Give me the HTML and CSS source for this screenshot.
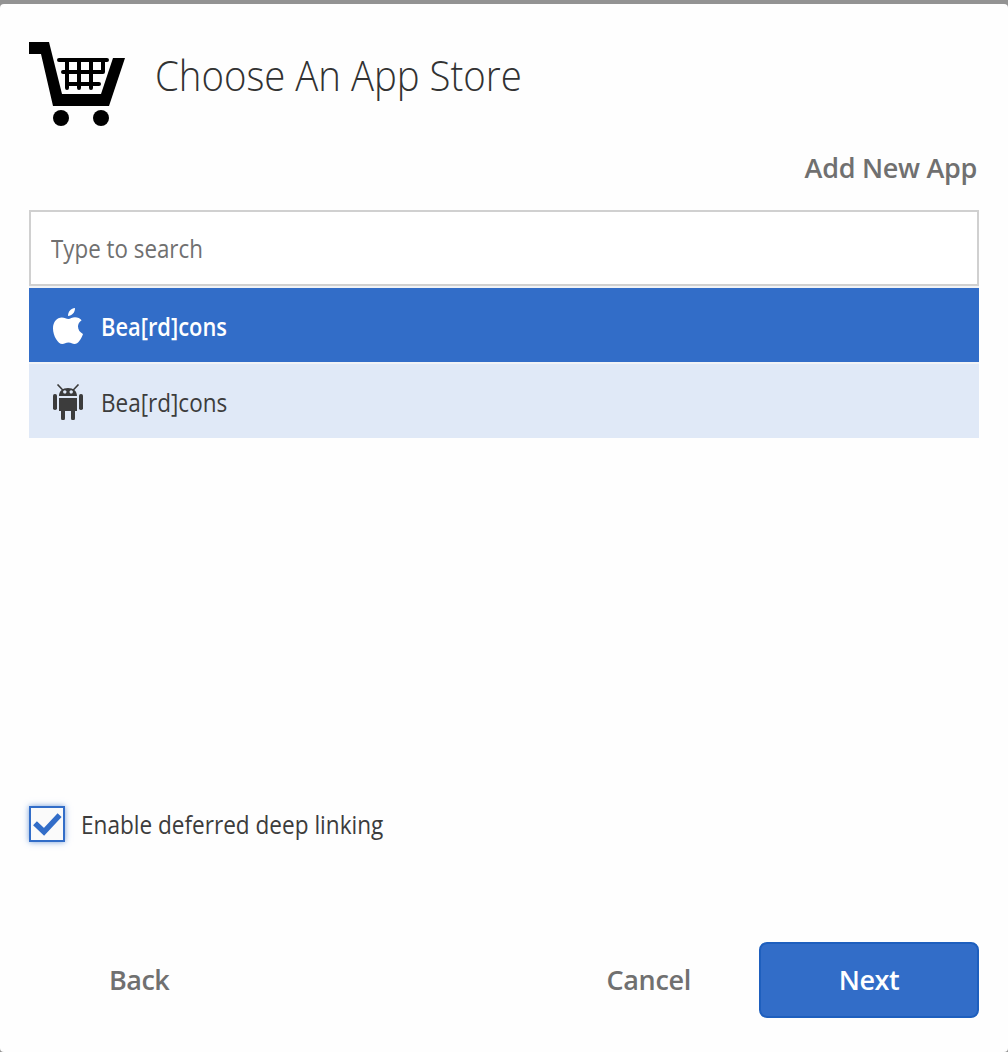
FILE: index.html
```html
<!DOCTYPE html>
<html lang="en">
<head>
<meta charset="utf-8">
<title>Choose An App Store</title>
<link rel="stylesheet" href="styles.css">
</head>
<body>
<main class="dialog">
  <header class="header">
    <svg class="cart" viewBox="29 42 96 84" aria-hidden="true">
      <path d="M29 42H49L62 94H101L113 58H125L109 106H53L41 54H29Z"/>
      <circle cx="61" cy="118" r="8"/><circle cx="101" cy="118" r="8"/>
      <path class="basket" d="M59 60H107M63 72H103V60M67 84H99M67 60V88M79 60V88M91 60V88"/>
    </svg>
    <h1 class="title">Choose An App Store</h1>
  </header>
  <div class="toolbar"><a class="link add">Add New App</a></div>
  <div class="search"><input class="search-input" type="text" placeholder="Type to search"></div>
  <ul class="apps">
    <li class="app selected">
      <svg class="icon" viewBox="0 0 30 36"><path d="M15 8C15 3.500 18 .4 22 0C22.200 4.500 19 7.500 15 8ZM28.600 12.200C26 14 25 16.200 25 18.600C25 21.800 27 24.700 30 25.900C28.500 30.600 25 36 21.600 36C19.200 36 18.300 34.500 15.500 34.500C12.700 34.500 11.500 36 9.300 36C5 36 0 28 0 20.500C0 13.500 4 9.400 8.800 9.400C11.500 9.400 13.500 10.900 15.400 10.900C17.200 10.900 19.200 9.200 22 9.200C24.800 9.200 27.100 10.400 28.600 12.200Z"/></svg>
      <span class="name">Bea[rd]cons</span>
    </li>
    <li class="app">
      <svg class="icon" viewBox="0 0 30 36"><path fill-rule="evenodd" d="M6 12C6 7 9.500 4 15 4S24 7 24 12ZM11.800 6.200a1.700 1.700 0 1 0 .01 0ZM18.200 6.200a1.700 1.700 0 1 0 .01 0Z"/><path d="M6 14H24V27H22V34.200a1.800 1.800 0 0 1-4 0V27H12V34.200a1.800 1.800 0 0 1-4 0V27H6Z"/><rect y="10" width="4" height="16" rx="1.800"/><rect x="26" y="10" width="4" height="16" rx="1.800"/><path class="antenna" d="M4.500.5L10 6.200M25.500.5L20 6.200"/></svg>
      <span class="name">Bea[rd]cons</span>
    </li>
  </ul>
  <label class="option">
    <span class="checkbox"><svg class="check" viewBox="0 0 32 32"><path d="M4 15.200L13 23.800L28.600 7.200"/></svg></span>
    <span class="option-label">Enable deferred deep linking</span>
  </label>
  <footer class="footer">
    <a class="link back">Back</a>
    <a class="link cancel">Cancel</a>
    <button class="next">Next</button>
  </footer>
</main>
</body>
</html>
```
FILE: styles.css
```css
* { box-sizing: border-box; }
body {
  margin: 0;
  padding-top: 4px;
  height: 1052px;
  background: #939393;
  font-family: "Open Sans", "Noto Sans", sans-serif;
  font-size: 25px;
  color: #3c3c3c;
  overflow: hidden;
}
.dialog {
  display: flex;
  flex-direction: column;
  height: 1048px;
  padding: 38px 29px 34px;
  background: #fefefe;
  border-radius: 4px;
}
.header { display: flex; height: 84px; }
.cart { width: 96px; height: 84px; margin-right: 30px; }
.basket { fill: none; stroke: #000; stroke-width: 4; stroke-linecap: round; stroke-linejoin: round; }
.title {
  margin: 3px 0 0;
  font-weight: 330;
  font-size: 42px;
  line-height: 60px;
  transform: scaleX(0.913);
  transform-origin: left;
  color: #323232;
  white-space: nowrap;
}
.toolbar { display: flex; justify-content: flex-end; height: 84px; padding: 22px 2px 0; }
.link {
  font-weight: 650;
  font-size: 27px;
  line-height: 40px;
  letter-spacing: -0.3px;
  color: #707070;
}
.link.back { letter-spacing: -0.5px; }
.search {
  flex: none;
  display: flex;
  height: 76px;
  padding: 0 20px;
  border: 2px solid #d0d0d0;
  background: #fff;
}
.search-input {
  width: 100%;
  padding: 0;
  border: 0;
  outline: 0;
  background: none;
  font: inherit;
  font-weight: 430;
  transform: scaleX(0.894);
  transform-origin: left;
}
.search-input::placeholder { color: #707070; opacity: 1; }
.apps {
  display: flex;
  flex-direction: column;
  gap: 2px;
  margin: 0;
  padding: 2px 0 0;
  list-style: none;
  background: #f1f3f6;
}
.app { display: flex; align-items: center; height: 74px; padding: 2px 24px 0; background: #e0e9f7; }
.selected { background: #326dc8; color: #fff; }
.icon { width: 30px; height: 36px; margin-right: 18px; fill: currentColor; }
.antenna { stroke: currentColor; stroke-width: 1.6; }
.name, .option-label {
  line-height: 36px;
  transform: scaleX(0.9);
  transform-origin: left;
  white-space: nowrap;
}
.option-label { transform: scaleX(0.903); }
.selected .name { font-weight: 550; transform: scaleX(0.875); }
.option { display: flex; align-items: center; height: 36px; margin-top: 368px; }
.checkbox {
  width: 36px;
  height: 36px;
  margin-right: 16px;
  border: 2px solid #326dc8;
  background: #fafafa;
  box-shadow: 0 0 6px #326dc8aa;
}
.check { display: block; width: 32px; height: 32px; fill: none; stroke: #326dc8; stroke-width: 5.5; }
.footer { display: flex; align-items: center; height: 76px; margin-top: 100px; padding-left: 80px; }
.cancel { margin-left: auto; margin-right: 68px; }
.next {
  width: 220px;
  height: 76px;
  padding: 0 0 2px;
  border: 2px solid #1e5fbe;
  border-radius: 8px;
  background: #326dc8;
  font-family: inherit;
  font-size: 27px;
  font-weight: 650;
  letter-spacing: -0.5px;
  color: #fff;
}
```
